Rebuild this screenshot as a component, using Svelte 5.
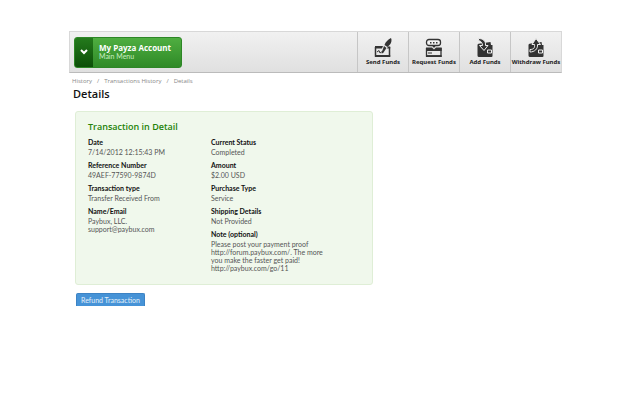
<script>
  const actions = [
    { id: 'send', label: 'Send Funds' },
    { id: 'request', label: 'Request Funds' },
    { id: 'add', label: 'Add Funds' },
    { id: 'withdraw', label: 'Withdraw Funds' }
  ];

  const columns = [
    [
      { label: 'Date', lines: ['7/14/2012 12:15:43 PM'] },
      { label: 'Reference Number', lines: ['49AEF-77590-9874D'] },
      { label: 'Transaction type', lines: ['Transfer Received From'] },
      { label: 'Name/Email', lines: ['Paybux, LLC.', 'support@paybux.com'] }
    ],
    [
      { label: 'Current Status', lines: ['Completed'] },
      { label: 'Amount', lines: ['$2.00 USD'] },
      { label: 'Purchase Type', lines: ['Service'] },
      { label: 'Shipping Details', lines: ['Not Provided'] },
      {
        label: 'Note (optional)',
        lines: [
          'Please post your payment proof',
          'http://forum.paybux.com/. The more',
          'you make the faster get paid!',
          'http://paybux.com/go/11'
        ]
      }
    ]
  ];
</script>

<div class="page">
  <header class="toolbar">
    <button class="account" type="button">
      <span class="account-arrow">
        <svg width="8" height="6" viewBox="0 0 8 6"><path d="M1 1l3 3 3-3" fill="none" stroke="#fff" stroke-width="2" /></svg>
      </span>
      <span class="account-text">
        <strong>My Payza Account</strong>
        <span>Main Menu</span>
      </span>
    </button>

    <nav class="actions">
      {#each actions as action}
        <a class="action" href="#{action.id}">
          <svg width="20" height="20" viewBox="0 0 20 20">
            {#if action.id === 'send'}
              <path d="M2.500 9v9h14V9" fill="none" stroke="#333" stroke-width="1.500" />
              <path d="M2 8h8l-1 2.500H2zM15 8.500h2.200v2H14zM2 17h15.200v2H2z" fill="#333" />
              <path d="M4 14l2-1.500 1 2.500 3-2" fill="none" stroke="#333" stroke-width="1" />
              <path d="M18 0c1 2 .5 4.500-1 6.500l-2.500 2.500-3-2C12.500 4 15 1.500 18 0z" fill="#333" />
              <path d="M11 8l2.500 2-3 4.500-1.800 1.200.4-2.200z" fill="#333" />
            {:else if action.id === 'request'}
              <rect x="2.500" y="1.500" width="14" height="6" rx="2.500" fill="#f4f4f4" stroke="#333" stroke-width="1.300" />
              <path d="M6 4h1.500v1.500H6zM9 4h1.500v1.500H9zM12 4h1.500v1.500H12zM8 7.500h4L10 10z" fill="#333" />
              <path d="M2.500 10v8h14.500v-8" fill="none" stroke="#333" stroke-width="1.300" />
              <path d="M2 9.500h6l2 2 2-2h5.700V13H2zM2 17.200h15.700V19H2z" fill="#333" />
              <path d="M4 15h4" stroke="#333" stroke-width="1" />
            {:else}
              <path d="M2.500 7q0-1 1-1.200L15.500 4l.5 3h1.500v11q0 1-1 1H4q-1.500 0-1.500-1.500z" fill="#333" />
              <path d="M12.500 12h4v3h-4z" fill="none" stroke="#eee" stroke-width="1" />
              {#if action.id === 'add'}
                <path d="M3.500 .5C8 .5 11 3 10.500 7.500H13L9 12.500l-4.500-5H7.500C7.500 5 6 3 3.500 2.500z" fill="#333" stroke="#eee" stroke-width="1" />
              {:else}
                <path d="M4 11.500c3.500 0 5-1.500 4.500-5H6l4-6 4.500 6h-3c.5 4.500-3 7.500-7.500 7.500z" fill="#333" stroke="#eee" stroke-width="1" />
              {/if}
            {/if}
          </svg>
          <span>{action.label}</span>
        </a>
      {/each}
    </nav>
  </header>

  <main>
    <nav class="breadcrumb">
      <a href="#history">History</a>
      <span>/</span>
      <a href="#transactions">Transactions History</a>
      <span>/</span>
      <a href="#details">Details</a>
    </nav>
    <h1>Details</h1>

    <section class="panel">
      <h2>Transaction in Detail</h2>
      <div class="columns">
        {#each columns as column}
          <dl>
            {#each column as field}
              <dt>{field.label}</dt>
              <dd>
                {#each field.lines as line}
                  <div>{line}</div>
                {/each}
              </dd>
            {/each}
          </dl>
        {/each}
      </div>
    </section>

    <button class="refund" type="button">Refund Transaction</button>
  </main>
</div>

<style>
  :global(body) {
    background: #fff;
  }

  .page {
    margin: 31px 78px 0 69px;
    font-family: Lato, "Open Sans", sans-serif;
    font-size: 7px;
    color: #555;
  }

  .toolbar {
    display: flex;
    justify-content: space-between;
    height: 42px;
    box-sizing: border-box;
    border: 1px solid #d8d8d8;
    border-bottom-color: #bbb;
    background: linear-gradient(#f1f1f1, #e0e0e0);
  }

  .account {
    display: flex;
    align-self: center;
    width: 108px;
    height: 31px;
    margin-left: 4px;
    padding: 0;
    overflow: hidden;
    border: 1px solid #2d8626;
    border-radius: 3px;
    background: linear-gradient(#4fae41, #2f8a27);
    color: #fff;
    font-family: inherit;
    text-align: left;
    cursor: pointer;
  }

  .account-arrow {
    display: flex;
    align-items: center;
    justify-content: center;
    width: 18px;
    height: 100%;
    background: linear-gradient(#247a1c, #0c4f08);
  }

  .account-text {
    display: flex;
    flex-direction: column;
    align-self: center;
    margin-left: 6px;
    font-size: 7px;
    line-height: 9px;
    color: #c9eec3;
  }

  .account-text strong {
    font-family: "Open Sans", sans-serif;
    font-size: 8px;
    color: #fff;
  }

  .actions {
    display: flex;
  }

  .action {
    display: flex;
    flex-direction: column;
    align-items: center;
    width: 50px;
    padding-top: 6px;
    border-left: 1px solid #c6c6c6;
    color: #222;
    font-family: "Noto Sans", sans-serif;
    font-size: 6px;
    font-weight: bold;
    line-height: 8px;
    text-decoration: none;
    white-space: nowrap;
  }

  main {
    padding: 0 3px;
  }

  .breadcrumb {
    display: flex;
    gap: 5px;
    margin-top: 3px;
    font-family: "Open Sans", sans-serif;
    font-size: 6px;
    line-height: 10px;
    color: #888;
  }

  .breadcrumb a {
    color: #888;
    text-decoration: none;
  }

  h1 {
    margin: 0 0 0 1px;
    font-family: "Open Sans", sans-serif;
    font-size: 11px;
    font-weight: 600;
    line-height: 16px;
    color: #111;
  }

  .panel {
    box-sizing: border-box;
    max-width: 298px;
    margin: 9px 0 0 3px;
    padding: 9px 12px 8px;
    border: 1px solid #dfeed6;
    border-radius: 3px;
    background: #f0f8ec;
  }

  h2 {
    margin: 0 0 4px;
    font-family: "Open Sans", sans-serif;
    font-size: 9px;
    font-weight: 600;
    line-height: 12px;
    color: #238208;
  }

  .columns {
    display: grid;
    grid-template-columns: 123px 1fr;
  }

  dl {
    margin: 0;
  }

  dt {
    font-weight: bold;
    line-height: 10px;
    color: #111;
  }

  dd {
    margin: 1px 0 4px;
    line-height: 8px;
  }

  .refund {
    display: block;
    margin: 8px 0 0 4px;
    padding: 1px 4px;
    border: 1px solid #3d83c4;
    border-bottom: 0;
    border-radius: 2px 2px 0 0;
    background: #4693d7;
    color: #e4f0fa;
    font-family: inherit;
    font-size: 7px;
    line-height: 10px;
    cursor: pointer;
  }
</style>
